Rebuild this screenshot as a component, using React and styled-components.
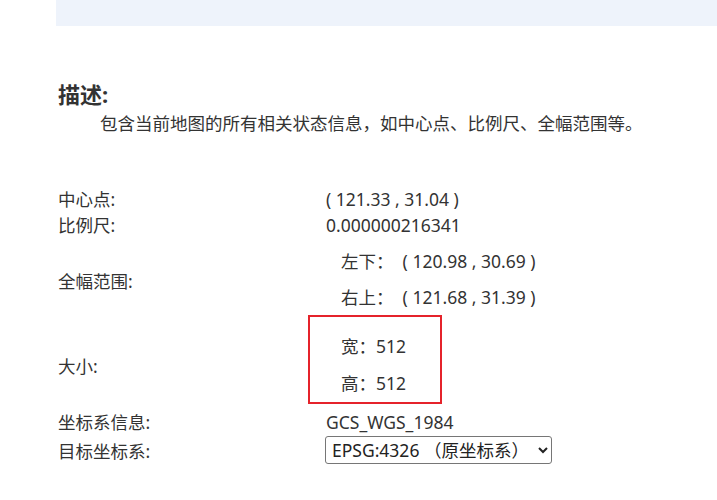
import React from "react";
import styled, { createGlobalStyle } from "styled-components";

const GlobalStyle = createGlobalStyle`
  body {
    margin: 0;
    background: #fff;
    color: #333;
    font-family: "Noto Sans", "Noto Sans CJK SC", sans-serif;
    font-size: 17.5px;
  }
`;

const mapState = {
  center: "( 121.33 , 31.04 )",
  scale: "0.000000216341",
  lowerLeft: "( 120.98 , 30.69 )",
  upperRight: "( 121.68 , 31.39 )",
  width: 512,
  height: 512,
  crs: "GCS_WGS_1984",
};

const App = () => {
  return (
    <>
      <GlobalStyle />
      <TopBar />
      <Wrapper>
        <Heading>描述:</Heading>
        <Desc>包含当前地图的所有相关状态信息，如中心点、比例尺、全幅范围等。</Desc>

        <InfoList>
          <Row>
            <Label>中心点:</Label>
            <Value>{mapState.center}</Value>
          </Row>
          <Row>
            <Label>比例尺:</Label>
            <Value>{mapState.scale}</Value>
          </Row>

          {/* extent */}
          <Row>
            <Label $offset={9}>全幅范围:</Label>
            <SubList>
              <SubRow>左下：{"\u00a0 "}{mapState.lowerLeft}</SubRow>
              <SubRow>右上：{"\u00a0 "}{mapState.upperRight}</SubRow>
            </SubList>
          </Row>

          {/* size, highlighted */}
          <Row>
            <Label $offset={13}>大小:</Label>
            <Highlight>
              <SubRow>宽：{mapState.width}</SubRow>
              <SubRow>高：{mapState.height}</SubRow>
            </Highlight>
          </Row>

          <Row $top={5}>
            <Label>坐标系信息:</Label>
            <Value>{mapState.crs}</Value>
          </Row>
          <Row $top={1}>
            <Label $offset={1}>目标坐标系:</Label>
            <SelectCell>
              <Select defaultValue="4326">
                <option value="4326">EPSG:4326 （原坐标系）</option>
                <option value="3857">EPSG:3857 （Web墨卡托）</option>
              </Select>
            </SelectCell>
          </Row>
        </InfoList>
      </Wrapper>
    </>
  );
};

const TopBar = styled.div`
  margin-left: 56px;
  height: 26px;
  background: #eef3fb;
`;

const Wrapper = styled.section`
  padding: 56px 0 0 58px;
`;

const Heading = styled.h3`
  margin: 0 0 5px;
  font-size: 22px;
  line-height: 24px;
  font-weight: bold;
  color: #333;
`;

const Desc = styled.p`
  margin: 0;
  padding-left: 42px;
  line-height: 24px;
`;

const InfoList = styled.div`
  display: flex;
  flex-direction: column;
  margin-top: 51px;
`;

const Row = styled.div`
  display: grid;
  grid-template-columns: 250px 1fr;
  align-items: center;
  padding-top: ${(p) => p.$top || 0}px;
`;

const Label = styled.div`
  line-height: 26px;
  padding-top: ${(p) => p.$offset || 0}px;
`;

const Value = styled.div`
  line-height: 26px;
  padding-left: 18px;
`;

const SubList = styled.div`
  padding: 5px 0 0 33px;
`;

const SubRow = styled.div`
  line-height: 36px;
`;

const Highlight = styled.div`
  box-sizing: border-box;
  width: 134px;
  height: 89px;
  padding: 11px 0 0 31px;
  border: 2px solid #e5232b;
  ${SubRow} + ${SubRow} {
    margin-top: 1px;
  }
`;

const SelectCell = styled.div`
  padding-left: 17px;
`;

const Select = styled.select`
  width: 227px;
  height: 28px;
  padding: 0 2px;
  font-family: inherit;
  font-size: 17.5px;
  color: #222;
  background: #fff;
  border: 1px solid #767676;
  border-radius: 3px;
`;

export default App;
